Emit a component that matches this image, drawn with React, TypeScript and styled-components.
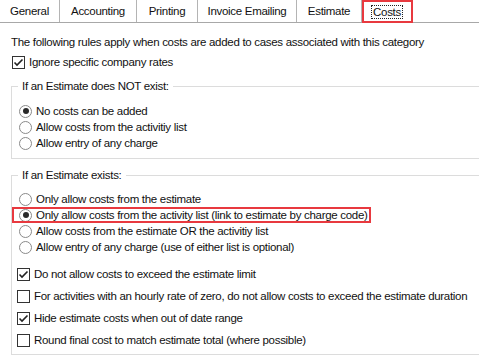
import styled, { createGlobalStyle } from "styled-components";

const Global = createGlobalStyle`
  html, body {
    margin: 0;
    padding: 0;
    background: #ffffff;
  }
  body {
    font-family: "Liberation Sans", Arial, sans-serif;
    font-size: 11.5px;
    letter-spacing: -0.3px;
    color: #111111;
  }
`;

const Page = styled.div`
  width: 479px;
  height: 358px;
  overflow: hidden;
  background: #ffffff;
`;

const TabBar = styled.div`
  display: flex;
  height: 22px;
  border-bottom: 1px solid #a8a8a8;
`;

const Tab = styled.div<{ $w: number; $active?: boolean }>`
  box-sizing: border-box;
  width: ${(p) => p.$w}px;
  height: ${(p) => (p.$active ? 23 : 22)}px;
  display: flex;
  align-items: center;
  justify-content: center;
  border-right: 1px solid #b4b4b4;
  background: #ffffff;
  outline: ${(p) => (p.$active ? "2px solid #e8393f" : "none")};
  outline-offset: -2px;
  position: relative;
  z-index: ${(p) => (p.$active ? 1 : 0)};
`;

const FocusText = styled.span`
  padding: 0 1px;
  outline: 1px dotted #222;
  outline-offset: 0;
`;

const Body = styled.div`
  padding: 11px 0 0 11px;
`;

const Intro = styled.div`
  height: 16px;
  line-height: 16px;
`;

const Row = styled.label<{ $indent: number; $gap: number; $highlight?: boolean }>`
  box-sizing: border-box;
  display: flex;
  align-items: center;
  gap: ${(p) => p.$gap}px;
  height: 16px;
  width: fit-content;
  padding: 0 3px 0 ${(p) => p.$indent}px;
  outline: ${(p) => (p.$highlight ? "2px solid #e8393f" : "none")};
  outline-offset: -2px;
  white-space: nowrap;
`;

const Box = styled.span`
  box-sizing: border-box;
  width: 13px;
  height: 13px;
  border: 1px solid #333333;
  background: #ffffff;
  display: flex;
  align-items: center;
  justify-content: center;
  flex: none;
`;

const Radio = styled.span<{ $on?: boolean }>`
  box-sizing: border-box;
  width: 13px;
  height: 13px;
  border-radius: 50%;
  border: 1px solid #8a8a8a;
  background: #ffffff;
  display: flex;
  align-items: center;
  justify-content: center;
  flex: none;
  &::after {
    content: "";
    display: ${(p) => (p.$on ? "block" : "none")};
    width: 6px;
    height: 6px;
    border-radius: 50%;
    background: #2a2a2a;
  }
`;

const Group = styled.fieldset<{ $top: number; $bottom: number }>`
  margin: 8px 0 0 0;
  padding: ${(p) => p.$top}px 0 ${(p) => p.$bottom}px 0;
  border: 1px solid #dcdcdc;
  width: 500px;
  box-sizing: border-box;
`;

const Legend = styled.legend`
  margin-left: 6px;
  padding: 0 4px;
  line-height: 16px;
`;

const List = styled.div<{ $gap: number; $mt?: number }>`
  display: flex;
  flex-direction: column;
  gap: ${(p) => p.$gap}px;
  margin-top: ${(p) => p.$mt || 0}px;
`;

const Check = () => (
  <svg width="11" height="11" viewBox="0 0 11 11">
    <polyline points="1.5,5.5 4,8 9.5,2.5" fill="none" stroke="#222" strokeWidth="1.6" />
  </svg>
);

const CheckRow = ({ on, label, indent }: { on: boolean; label: string; indent: number }) => (
  <Row $indent={indent} $gap={4}>
    <Box>{on && <Check />}</Box>
    {label}
  </Row>
);

const RadioRow = ({ on, label, hl }: { on: boolean; label: string; hl?: boolean }) => (
  <Row $indent={7} $gap={4} $highlight={hl}>
    <Radio $on={on} />
    {label}
  </Row>
);

const tabs = [
  { label: "General", w: 60 },
  { label: "Accounting", w: 77 },
  { label: "Printing", w: 61 },
  { label: "Invoice Emailing", w: 99 },
  { label: "Estimate", w: 65 },
  { label: "Costs", w: 51, active: true },
];

export default function App() {
  return (
    <Page>
      <Global />
      <TabBar>
        {tabs.map((t) => (
          <Tab key={t.label} $w={t.w} $active={t.active}>
            {t.active ? <FocusText>{t.label}</FocusText> : t.label}
          </Tab>
        ))}
      </TabBar>
      <Body>
        <Intro>The following rules apply when costs are added to cases associated with this category</Intro>
        <List $gap={0} $mt={4}>
          <CheckRow on label="Ignore specific company rates" indent={1} />
        </List>
        <Group $top={9} $bottom={7}>
          <Legend>If an Estimate does NOT exist:</Legend>
          <List $gap={0}>
            <RadioRow on label="No costs can be added" />
            <RadioRow on={false} label="Allow costs from the activitiy list" />
            <RadioRow on={false} label="Allow entry of any charge" />
          </List>
        </Group>
        <Group $top={8} $bottom={6}>
          <Legend>If an Estimate exists:</Legend>
          <List $gap={0}>
            <RadioRow on={false} label="Only allow costs from the estimate" />
            <RadioRow on hl label="Only allow costs from the activity list (link to estimate by charge code)" />
            <RadioRow on={false} label="Allow costs from the estimate OR the activitiy list" />
            <RadioRow on={false} label="Allow entry of any charge (use of either list is optional)" />
          </List>
          <List $gap={6} $mt={11}>
            <CheckRow on label="Do not allow costs to exceed the estimate limit" indent={5} />
            <CheckRow on={false} label="For activities with an hourly rate of zero, do not allow costs to exceed the estimate duration" indent={5} />
            <CheckRow on label="Hide estimate costs when out of date range" indent={5} />
            <CheckRow on={false} label="Round final cost to match estimate total (where possible)" indent={5} />
          </List>
        </Group>
      </Body>
    </Page>
  );
}
